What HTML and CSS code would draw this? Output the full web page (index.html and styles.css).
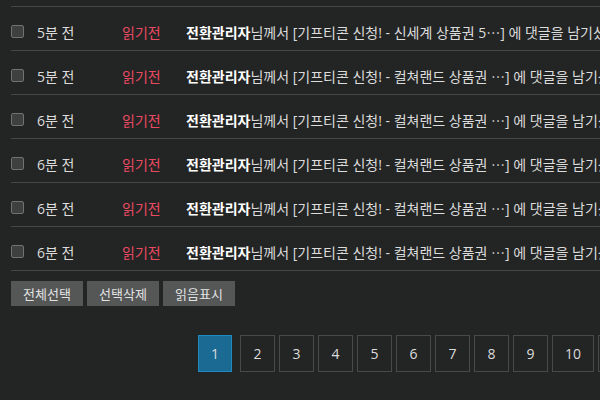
FILE: index.html
```html
<!DOCTYPE html>
<html lang="ko">
<head>
    <meta charset="UTF-8">
    <title>알림</title>
    <link rel="stylesheet" href="styles.css">
</head>
<body>
    <div class="wrap">
        <ul class="noti-list">
            <li class="noti-row">
                <input type="checkbox" class="chk">
                <span class="time">5분 전</span>
                <span class="state">읽기전</span>
                <span class="msg"><b>전환관리자</b>님께서 [기프티콘 신청! - 신세계 상품권 5⋯] 에 댓글을 남기셨습니다.</span>
            </li>
            <li class="noti-row">
                <input type="checkbox" class="chk">
                <span class="time">5분 전</span>
                <span class="state">읽기전</span>
                <span class="msg"><b>전환관리자</b>님께서 [기프티콘 신청! - 컬쳐랜드 상품권 ⋯] 에 댓글을 남기셨습니다.</span>
            </li>
            <li class="noti-row">
                <input type="checkbox" class="chk">
                <span class="time">6분 전</span>
                <span class="state">읽기전</span>
                <span class="msg"><b>전환관리자</b>님께서 [기프티콘 신청! - 컬쳐랜드 상품권 ⋯] 에 댓글을 남기셨습니다.</span>
            </li>
            <li class="noti-row">
                <input type="checkbox" class="chk">
                <span class="time">6분 전</span>
                <span class="state">읽기전</span>
                <span class="msg"><b>전환관리자</b>님께서 [기프티콘 신청! - 컬쳐랜드 상품권 ⋯] 에 댓글을 남기셨습니다.</span>
            </li>
            <li class="noti-row">
                <input type="checkbox" class="chk">
                <span class="time">6분 전</span>
                <span class="state">읽기전</span>
                <span class="msg"><b>전환관리자</b>님께서 [기프티콘 신청! - 컬쳐랜드 상품권 ⋯] 에 댓글을 남기셨습니다.</span>
            </li>
            <li class="noti-row">
                <input type="checkbox" class="chk">
                <span class="time">6분 전</span>
                <span class="state">읽기전</span>
                <span class="msg"><b>전환관리자</b>님께서 [기프티콘 신청! - 컬쳐랜드 상품권 ⋯] 에 댓글을 남기셨습니다.</span>
            </li>
        </ul>

        <div class="actions">
            <button class="btn">전체선택</button>
            <button class="btn">선택삭제</button>
            <button class="btn">읽음표시</button>
        </div>

        <div class="pagination">
            <a class="page active">1</a>
            <a class="page">2</a>
            <a class="page">3</a>
            <a class="page">4</a>
            <a class="page">5</a>
            <a class="page">6</a>
            <a class="page">7</a>
            <a class="page">8</a>
            <a class="page">9</a>
            <a class="page">10</a>
            <a class="page">다음</a>
        </div>
    </div>
</body>
</html>
```
FILE: styles.css
```css
* {
    margin: 0;
    padding: 0;
    box-sizing: border-box;
}

body {
    background: #232424;
    color: #dcdcdc;
    font-family: "Open Sans", "Noto Sans CJK KR", sans-serif;
    font-size: 14px;
    overflow: hidden;
}

.wrap {
    width: 900px;
    padding: 6px 0 0 11px;
}

.noti-list {
    list-style: none;
    border-top: 1px solid #464747;
}

.noti-row {
    display: flex;
    align-items: center;
    height: 44px;
    padding-top: 6px;
    border-bottom: 1px solid #464747;
    white-space: nowrap;
}

.chk {
    appearance: none;
    width: 13px;
    height: 13px;
    background: #3e3f3f;
    border: 1px solid #707171;
    border-radius: 2px;
    margin-right: 13px;
}

.time {
    width: 85px;
}

.state {
    width: 64px;
    color: #ea4a62;
}

.msg b {
    color: #fff;
}

.actions {
    display: flex;
    gap: 4px;
    margin-top: 10px;
}

.btn {
    background: #555757;
    color: #e2e2e2;
    border: none;
    font: inherit;
    font-size: 13px;
    height: 25px;
    width: 72px;
    padding: 0;
}

.pagination {
    display: flex;
    gap: 4px;
    margin: 29px 0 0 187px;
}

.page {
    min-width: 35px;
    height: 37px;
    padding: 0 12px;
    border: 1px solid #484949;
    display: flex;
    align-items: center;
    justify-content: center;
    color: #dcdcdc;
}

.page.active {
    min-width: 34px;
    margin-right: 4px;
    background: #1a6a93;
    border-color: #1e8ac2;
}
```
